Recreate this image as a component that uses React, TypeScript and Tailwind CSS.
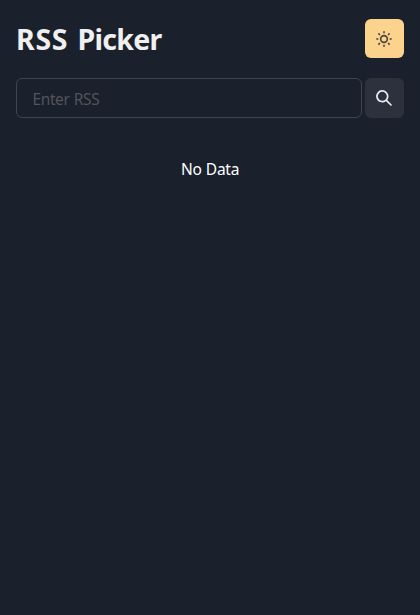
import React from "react";

function SunIcon() {
  return (
    <svg viewBox="0 0 24 24" className="size-4" fill="none" stroke="currentColor" strokeWidth="2.4" strokeLinecap="round" strokeLinejoin="round">
      <circle cx="12" cy="12" r="5" />
      <path d="M12 1.3v1.4M12 21.3v1.4M4.3 4.3l1 1M18.7 18.7l1 1M1.3 12h1.4M21.3 12h1.4M4.3 19.7l1-1M18.7 5.3l1-1" />
    </svg>
  );
}

function SearchIcon() {
  return (
    <svg viewBox="0 0 24 24" className="size-4" fill="currentColor">
      <path d="M23.384,21.619,16.855,15.09a9.284,9.284,0,1,0-1.768,1.768l6.529,6.529a1.266,1.266,0,0,0,1.768,0A1.251,1.251,0,0,0,23.384,21.619ZM2.75,9.5a6.75,6.75,0,1,1,6.75,6.75A6.758,6.758,0,0,1,2.75,9.5Z" />
    </svg>
  );
}

export default function App() {
  return (
    <main className="min-h-screen bg-[#1a202c] px-4 pt-[18.7px] font-['Noto_Sans',sans-serif] text-white">
      <header className="flex items-center justify-between">
        <h1 className="pt-[1.5px] text-[28.5px] leading-[38px] font-bold text-[#f0f0f0] [word-spacing:1.8px]">
          <span className="tracking-[0.7px]">RSS</span> <span className="tracking-[-0.7px]">Picker</span>
        </h1>
        <button aria-label="Toggle theme" className="flex h-[39.5px] w-[39.5px] items-center justify-center rounded-md bg-[#fbd38d] pt-px text-[#47433f]">
          <SunIcon />
        </button>
      </header>
      <div className="mt-5 flex gap-[3px]">
        <input placeholder="Enter RSS" className="h-[39.4px] min-w-0 flex-1 rounded-md border border-[#3f444e] bg-transparent px-[15.5px] pt-0.5 text-[15.5px] tracking-[-0.4px] outline-none placeholder:text-[#50545b] placeholder:[word-spacing:0.8px]" />
        <button aria-label="Search" className="flex h-[39.4px] w-[39.5px] items-center justify-center rounded-md bg-[#2c313d] text-[#ebecee]">
          <SearchIcon />
        </button>
      </div>
      <p className="mt-[39.5px] text-center text-[15.5px] leading-6 tracking-[-0.25px] [word-spacing:0.5px]">No Data</p>
    </main>
  );
}
